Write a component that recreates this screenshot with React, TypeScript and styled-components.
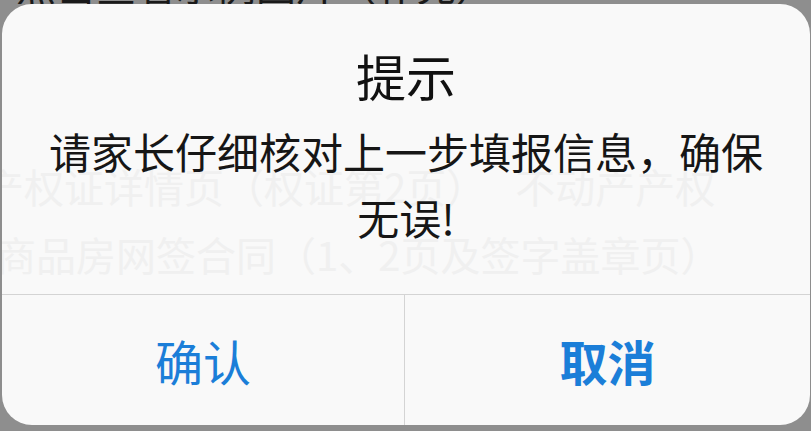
import React from "react";
import styled, { createGlobalStyle } from "styled-components";

const Global = createGlobalStyle`
  html, body { margin: 0; padding: 0; background: #8e8e8e; }
  body { font-family: "Noto Sans CJK SC", "Noto Sans", sans-serif; }
  #root { width: 811px; height: 431px; overflow: hidden; }
`;

const Screen = styled.div`
  width: 811px;
  height: 431px;
  display: flex;
  flex-direction: column;
  background: #8e8e8e;
  padding: 0 1px 0 2px;
  box-sizing: border-box;
`;

const PeekStrip = styled.div`
  height: 4px;
  overflow: hidden;
  display: flex;
  align-items: flex-end;
  padding-left: 14px;
`;

const PeekText = styled.div`
  font-size: 40px;
  line-height: 40px;
  color: #1a1a1a;
  white-space: nowrap;
  flex-shrink: 0;
`;

const Dialog = styled.div`
  position: relative;
  width: 808px;
  height: 421px;
  background: #f9f9f9;
  border-radius: 30px;
  overflow: hidden;
  display: flex;
  flex-direction: column;
`;

const Ghost = styled.div`
  position: absolute;
  inset: 0;
  pointer-events: none;
  display: flex;
  flex-direction: column;
  padding-top: 162px;
  gap: 28px;
  color: #f0f0f0;
  font-size: 40px;
  line-height: 40px;
  white-space: nowrap;
`;

const GhostLine = styled.div<{ $indent: number }>`
  margin-left: ${(p) => p.$indent}px;
`;

const Body = styled.div`
  position: relative;
  flex: 1;
  display: flex;
  flex-direction: column;
  align-items: center;
  padding: 41px 44px 0;
`;

const Title = styled.div`
  font-size: 50px;
  line-height: 60px;
  font-weight: 400;
  color: #111;
`;

const Message = styled.div`
  margin-top: 13px;
  width: 720px;
  font-size: 42px;
  line-height: 66px;
  color: #161616;
  text-align: center;
`;

const Actions = styled.div`
  position: relative;
  height: 130px;
  display: grid;
  grid-template-columns: 403px 1fr;
  border-top: 1px solid #d4d4d4;
`;

const ActionButton = styled.button<{ $bold?: boolean; $divider?: boolean }>`
  border: none;
  background: transparent;
  padding: 0;
  margin: 0;
  font-family: "Noto Sans CJK SC", "Noto Sans", sans-serif;
  font-size: 48px;
  font-weight: ${(p) => (p.$bold ? 700 : 400)};
  color: #1b7ed8;
  display: flex;
  align-items: center;
  justify-content: center;
  border-right: ${(p) => (p.$divider ? "1px solid #d4d4d4" : "none")};
  cursor: pointer;
`;

export default function App() {
  return (
    <>
      <Global />
      <Screen>
        <PeekStrip>
          <PeekText>点击查看示例图片（补充）</PeekText>
        </PeekStrip>
        <Dialog>
          <Ghost>
            <GhostLine $indent={-18}>产权证详情页（权证第2页）　 不动产产权</GhostLine>
            <GhostLine $indent={-6}>商品房网签合同（1、2页及签字盖章页）</GhostLine>
          </Ghost>
          <Body>
            <Title>提示</Title>
            <Message>请家长仔细核对上一步填报信息，确保无误!</Message>
          </Body>
          <Actions>
            <ActionButton $divider>确认</ActionButton>
            <ActionButton $bold>取消</ActionButton>
          </Actions>
        </Dialog>
      </Screen>
    </>
  );
}
